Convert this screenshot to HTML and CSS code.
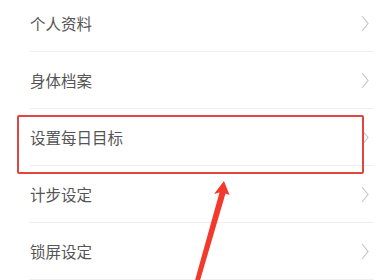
FILE: index.html
```html
<!DOCTYPE html>
<html>

<head>
  <meta charset="utf-8">
  <title>设置</title>
  <link rel="stylesheet" href="styles.css">
</head>

<body>
  <div class="menu">
    <div class="row"><span>个人资料</span><svg class="chev" viewBox="0 0 8 17"><path d="M1 1 L7 8.5 L1 16" /></svg></div>
    <div class="row"><span>身体档案</span><svg class="chev" viewBox="0 0 8 17"><path d="M1 1 L7 8.5 L1 16" /></svg></div>
    <div class="row"><span>设置每日目标</span><svg class="chev" viewBox="0 0 8 17"><path d="M1 1 L7 8.5 L1 16" /></svg></div>
    <div class="row"><span>计步设定</span><svg class="chev" viewBox="0 0 8 17"><path d="M1 1 L7 8.5 L1 16" /></svg></div>
    <div class="row"><span>锁屏设定</span><svg class="chev" viewBox="0 0 8 17"><path d="M1 1 L7 8.5 L1 16" /></svg></div>
  </div>

  <!-- annotation overlay -->
  <div class="highlight"></div>
  <svg class="arrow" viewBox="0 0 380 280">
    <polygon points="224,181 229.5,195 225.5,193.5 199,284 194,284 219.5,192.5 214,194" />
  </svg>
</body>

</html>
```

FILE: styles.css
```css
html,
body {
  margin: 0;
  height: 100%;
  background-color: #ffffff;
  overflow: hidden;
}

body {
  position: relative;
  font-family: "Noto Sans CJK SC", "Noto Sans", sans-serif;
}

.menu {
  display: flex;
  flex-direction: column;
  margin-top: -5px;
  padding-left: 29px;
  padding-right: 6px;
}

.row {
  display: flex;
  align-items: center;
  justify-content: space-between;
  height: 56px;
  padding-left: 1px;
  border-bottom: 1px solid #efefef;
  font-size: 15.5px;
  color: #555555;
}

.chev {
  width: 8px;
  height: 17px;
  margin-right: 5px;
  fill: none;
  stroke: #c4c4c4;
  stroke-width: 1.1;
}

.highlight {
  position: absolute;
  left: 17px;
  top: 115px;
  width: 343px;
  height: 55px;
  border: 2px solid #e4453f;
  border-radius: 2px;
}

.arrow {
  position: absolute;
  left: 0;
  top: 0;
  width: 380px;
  height: 280px;
  fill: #f2392c;
}
```
